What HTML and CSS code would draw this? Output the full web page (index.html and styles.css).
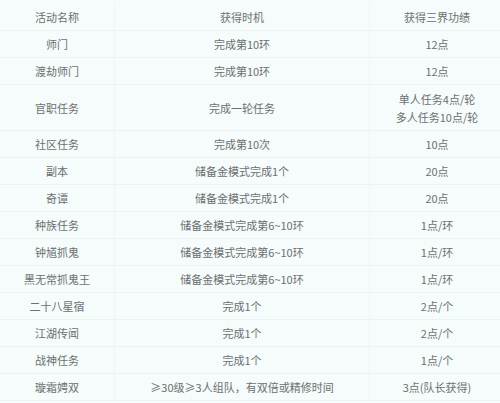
FILE: index.html
```html
<!DOCTYPE html>
<html lang="zh">
<head>
<meta charset="utf-8">
<link rel="stylesheet" href="styles.css">
</head>
<body>
<table class="tbl">
  <tr class="row"><td class="c1">活动名称</td><td class="c2">获得时机</td><td class="c3">获得三界功绩</td></tr>
  <tr class="row"><td class="c1">师门</td><td class="c2">完成第10环</td><td class="c3">12点</td></tr>
  <tr class="row"><td class="c1">渡劫师门</td><td class="c2">完成第10环</td><td class="c3">12点</td></tr>
  <tr class="row tall"><td class="c1">官职任务</td><td class="c2">完成一轮任务</td><td class="c3">单人任务4点/轮<br>多人任务10点/轮</td></tr>
  <tr class="row"><td class="c1">社区任务</td><td class="c2">完成第10次</td><td class="c3">10点</td></tr>
  <tr class="row"><td class="c1">副本</td><td class="c2">储备金模式完成1个</td><td class="c3">20点</td></tr>
  <tr class="row"><td class="c1">奇谭</td><td class="c2">储备金模式完成1个</td><td class="c3">20点</td></tr>
  <tr class="row"><td class="c1">种族任务</td><td class="c2">储备金模式完成第6~10环</td><td class="c3">1点/环</td></tr>
  <tr class="row"><td class="c1">钟馗抓鬼</td><td class="c2">储备金模式完成第6~10环</td><td class="c3">1点/环</td></tr>
  <tr class="row"><td class="c1">黑无常抓鬼王</td><td class="c2">储备金模式完成第6~10环</td><td class="c3">1点/环</td></tr>
  <tr class="row"><td class="c1">二十八星宿</td><td class="c2">完成1个</td><td class="c3">2点/个</td></tr>
  <tr class="row"><td class="c1">江湖传闻</td><td class="c2">完成1个</td><td class="c3">2点/个</td></tr>
  <tr class="row"><td class="c1">战神任务</td><td class="c2">完成1个</td><td class="c3">1点/个</td></tr>
  <tr class="row"><td class="c1">璇霜娉双</td><td class="c2">≥30级≥3人组队，有双倍或精修时间</td><td class="c3">3点(队长获得)</td></tr>
</table>
</body>
</html>
```
FILE: styles.css
```css
html, body {
  margin: 0;
  padding: 0;
  background: #f6fbfb;
}
body {
  padding-top: 4px;
  font-family: "Noto Sans CJK SC", "Noto Sans", sans-serif;
  font-size: 11px;
  color: #6b7070;
}
.tbl {
  width: 502px;
  border-collapse: collapse;
  table-layout: fixed;
}
.row td {
  height: 26px;
  padding: 0;
  text-align: center;
  vertical-align: middle;
  border-bottom: 1px solid #ecf1f1;
  line-height: 18px;
}
.row.tall td {
  height: 45px;
}
.row td + td {
  border-left: 1px solid #f0f4f4;
}
.c1 { width: 114px; }
.c2 { width: 254px; }
.c3 { width: 134px; }
```
